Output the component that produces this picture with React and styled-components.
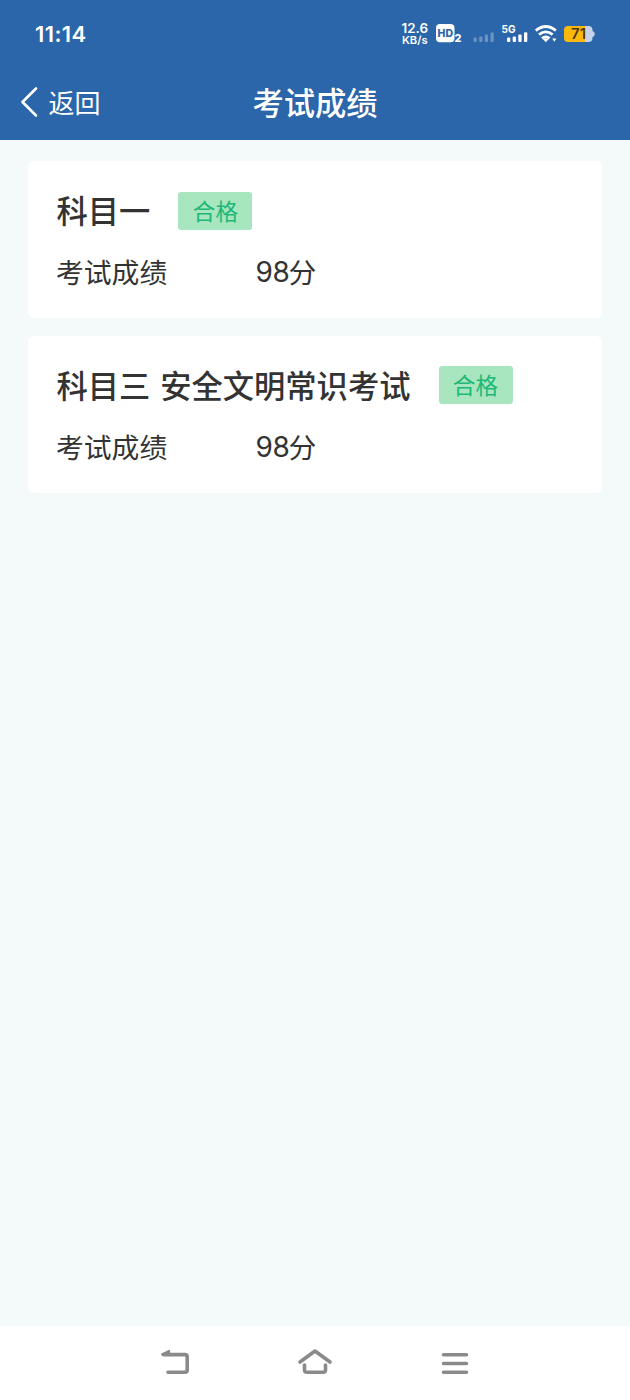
import styled, { createGlobalStyle } from "styled-components"

const GlobalStyle = createGlobalStyle`
* {
  box-sizing: border-box;
}
body {
  margin: 0;
  background: #f4f9fa;
  font-family: "Noto Sans CJK SC", sans-serif;
  color: #333;
}
`

const Page = styled.div`
height: 1400px;
display: flex;
flex-direction: column;
`

const Header = styled.header`
height: 140px;
background: #2b65aa;
color: #fff;
`

const StatusBar = styled.div`
height: 66px;
padding: 0 35px;
display: flex;
justify-content: space-between;
align-items: center;
font-family: Inter, sans-serif;
`

const Time = styled.div`
font-size: 22px;
line-height: 24px;
font-weight: 600;
letter-spacing: 0.4px;
padding-top: 1px;
`

const StatusIcons = styled.svg`
display: block;
width: 200px;
height: 36px;
`

const TitleBar = styled.div`
height: 72px;
padding: 0 20px;
display: grid;
grid-template-columns: 1fr auto 1fr;
align-items: center;
`

const Back = styled.div`
display: flex;
align-items: center;
gap: 10.5px;
font-size: 26px;
line-height: 38px;
`

const BackIcon = styled.svg`
width: 18px;
height: 32px;
`

const PageTitle = styled.div`
font-size: 31.3px;
line-height: 44px;
font-weight: 500;
`

const List = styled.main`
flex: 1;
padding: 21px 28px;
display: flex;
flex-direction: column;
gap: 17.5px;
`

const Card = styled.section`
height: 157px;
padding: 28px 28px 0;
border-radius: 6px;
background: #fff;
`

const CardHead = styled.div`
display: flex;
align-items: center;
gap: 28px;
height: 42px;
`

const Subject = styled.div`
font-size: 31.3px;
line-height: 42px;
font-weight: 500;
word-spacing: 2.7px;
padding-left: 0.5px;
`

const Badge = styled.div`
width: 74px;
height: 38px;
margin-top: 1px;
border-radius: 3px;
background: #a8e6bf;
color: #20b877;
font-size: 22.7px;
line-height: 38px;
text-align: center;
`

const ScoreRow = styled.div`
display: flex;
margin-top: 20px;
font-size: 27.8px;
line-height: 40px;
`

const Label = styled.div`
width: 199.5px;
`

const Score = styled.div`
display: flex;
`

const Digits = styled.span`
font-family: Inter, sans-serif;
font-size: 28px;
width: 33px;
padding-top: 1px;
letter-spacing: -0.3px;
`

const NavBar = styled.nav`
height: 74px;
padding: 0 105px;
display: flex;
background: #fff;
`

const NavItem = styled.div`
flex: 1;
display: flex;
justify-content: center;
align-items: center;
`

const NavIcon = styled.svg`
width: 36px;
height: 32px;
fill: none;
stroke: #8a8a8a;
stroke-width: 3.6;
stroke-linecap: round;
stroke-linejoin: round;
`

const results = [
  { subject: "科目一", status: "合格", score: 98 },
  { subject: "科目三 安全文明常识考试", status: "合格", score: 98 },
]

const Status = () => {
  return (
    <StatusIcons viewBox="395 15 200 36" fill="#fff" fontFamily="Inter, sans-serif" fontWeight="600">
      <text x="401.5" y="33" fontSize="12.5" textLength="26.5" lengthAdjust="spacingAndGlyphs">12.6</text>
      <text x="402" y="44" fontSize="10.8" textLength="25.5" lengthAdjust="spacingAndGlyphs">KB/s</text>
      <rect x="436" y="24" width="18.5" height="18.3" rx="4" />
      <text x="437.6" y="37.3" fontSize="10.8" fontWeight="800" fill="#2b65aa" textLength="15.4" lengthAdjust="spacingAndGlyphs">HD</text>
      <text x="454.6" y="42" fontSize="10.8" fontWeight="800">2</text>
      <g opacity="0.3">
        <rect x="473.5" y="37.5" width="3.2" height="4.5" rx="1" />
        <rect x="479.2" y="36.5" width="3.2" height="5.5" rx="1" />
        <rect x="484.8" y="34.5" width="3.2" height="7.5" rx="1" />
        <rect x="490.5" y="32.5" width="3.2" height="9.5" rx="1" />
      </g>
      <text x="501.5" y="32.8" fontSize="10.8" fontWeight="700" textLength="14" lengthAdjust="spacingAndGlyphs">5G</text>
      <rect x="507" y="37.5" width="3.3" height="4.5" rx="1" />
      <rect x="512.7" y="36.5" width="3.3" height="5.5" rx="1" />
      <rect x="518.3" y="34.5" width="3.3" height="7.5" rx="1" />
      <rect x="524" y="32.3" width="3.3" height="9.7" rx="1" />
      <g fill="none" stroke="#fff" strokeWidth="2.7">
        <path d="M535.8 30.6 Q545.8 22.4 555.8 30.6" />
        <path d="M539 34.6 Q545.8 29 552.6 34.6" />
        <path d="M542 38.4 Q545.8 35.2 549.6 38.4" />
      </g>
      <path d="M543 39.2 Q545.8 37.4 548.6 39.2 L545.8 42.2 Z" />
      <path d="M552.2 38.5 h4.2 l-2.1 3.2 Z" />
      <path d="M568 26 H585 V42 H568 Q564 42 564 38 V30 Q564 26 568 26 Z" fill="#fdb90b" />
      <path d="M585 26 H588.5 Q592.5 26 592.5 30 V31 Q594.8 31.3 594.8 34 Q594.8 36.7 592.5 37 V38 Q592.5 42 588.5 42 H585 Z" fill="#c5d3ea" />
      <text x="571" y="39.2" fontSize="14" fontWeight="600" fill="#4a3a14" textLength="15" lengthAdjust="spacingAndGlyphs">71</text>
    </StatusIcons>
  )
}

const ResultCard = ({ subject, status, score }) => {
  return (
    <Card>
      <CardHead>
        <Subject>{subject}</Subject>
        <Badge>{status}</Badge>
      </CardHead>
      <ScoreRow>
        <Label>考试成绩</Label>
        <Score><Digits>{score}</Digits>分</Score>
      </ScoreRow>
    </Card>
  )
}

const App = () => {
  return (
    <Page>
      <GlobalStyle />
      <Header>
        <StatusBar>
          <Time>11:14</Time>
          <Status />
        </StatusBar>
        <TitleBar>
          <Back>
            <BackIcon viewBox="0 0 18 32" fill="none" stroke="#fff" strokeWidth="2.6" strokeLinecap="round" strokeLinejoin="round">
              <path d="M16 2.5 L2.5 16 L16 29.5" />
            </BackIcon>
            返回
          </Back>
          <PageTitle>考试成绩</PageTitle>
        </TitleBar>
      </Header>
      <List>
        {results.map((item) => (
          <ResultCard key={item.subject} {...item} />
        ))}
      </List>
      <NavBar>
        <NavItem>
          <NavIcon viewBox="157 1347 36 32">
            <path d="M163.5 1354.6 H185 Q187.2 1354.6 187.2 1357 V1370 Q187.2 1372.3 185 1372.3 H168" />
            <path d="M162 1354.5 L169 1350.8 L169.5 1354.5 Z" fill="#8a8a8a" strokeWidth="2" />
          </NavIcon>
        </NavItem>
        <NavItem>
          <NavIcon viewBox="297 1347 36 32">
            <path d="M300 1362 L315 1351 L330 1362" />
            <path d="M304.5 1365 V1370 Q304.5 1372.3 307 1372.3 H323 Q325.5 1372.3 325.5 1370 V1365" />
          </NavIcon>
        </NavItem>
        <NavItem>
          <NavIcon viewBox="437 1347 36 32">
            <path d="M443.5 1354.7 H466.5 M443.5 1363.5 H466.5 M443.5 1372.2 H466.5" />
          </NavIcon>
        </NavItem>
      </NavBar>
    </Page>
  )
}

export default App
